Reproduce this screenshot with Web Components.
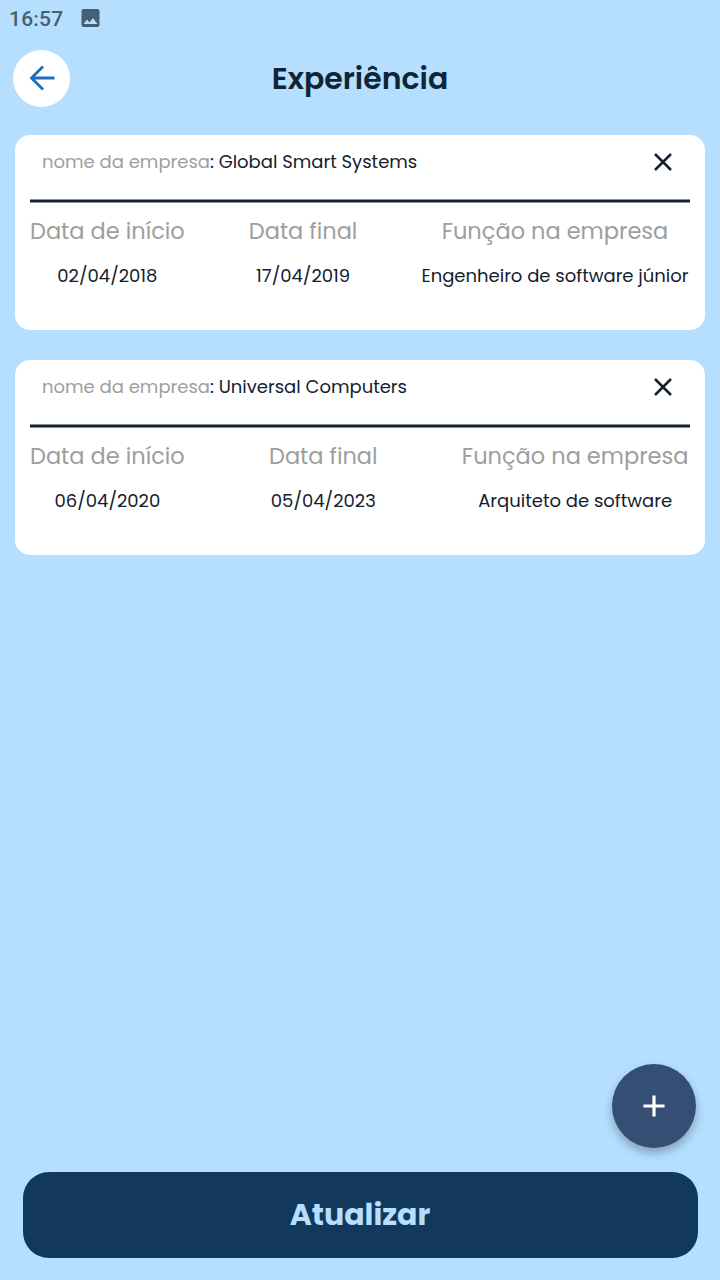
<!DOCTYPE html>
<html lang="pt-BR">
<head>
<meta charset="utf-8">
<meta name="viewport" content="width=device-width, initial-scale=1">
<title>Experiência</title>
<style>
  body {
    background-color: #b5deff;
    color: #14202e;
    font-family: Poppins, Inter, "Open Sans", sans-serif;
    margin: 0;
  }
</style>
</head>
<body>
<experience-page>
  <status-bar slot="status">16:57</status-bar>
  <page-header slot="header">Experiência</page-header>
  <experience-card start="02/04/2018" end="17/04/2019">
    <span slot="name">Global Smart Systems</span>
    <span slot="role">Engenheiro de software júnior</span>
  </experience-card>
  <experience-card start="06/04/2020" end="05/04/2023">
    <span slot="name">Universal Computers</span>
    <span slot="role">Arquiteto de software</span>
  </experience-card>
  <add-button slot="footer"></add-button>
  <update-button slot="footer">Atualizar</update-button>
</experience-page>

<script>
class ExperiencePage extends HTMLElement {
  constructor(){
    super();
    this.attachShadow({mode: "open"}).innerHTML = `
      <style>
        :host {
          box-sizing: border-box;
          display: flex;
          flex-direction: column;
          height: 1280px;
          overflow: hidden;
          width: 720px;
        }
        main {
          display: flex;
          flex: 1;
          flex-direction: column;
          gap: 30px;
          padding: 20px 15px 0;
        }
        footer {
          display: flex;
          flex-direction: column;
          gap: 24px;
          padding: 0 22.5px 22.5px;
        }
      </style>
      <slot name="status"></slot>
      <slot name="header"></slot>
      <main><slot></slot></main>
      <footer><slot name="footer"></slot></footer>
    `;
  }
}

class StatusBar extends HTMLElement {
  constructor(){
    super();
    this.attachShadow({mode: "open"}).innerHTML = `
      <style>
        :host {
          align-items: center;
          color: #465f71;
          display: flex;
          font: 500 21px/38px Roboto, sans-serif;
          height: 37px;
          letter-spacing: 0.2px;
          padding-left: 9px;
        }
        span {
          width: 72px;
        }
        svg {
          display: block;
        }
      </style>
      <span><slot></slot></span>
      <svg width="19" height="19" viewBox="2.500 3 19 19" fill="#465f71">
        <path d="M21 19V5c0-1.100-.9-2-2-2H5c-1.100 0-2 .9-2 2v14c0 1.100.9 2 2 2h14c1.100 0 2-.9 2-2zM8.500 13.500l2.500 3.010L14.500 12l4.500 6H5l3.500-4.500z"/>
      </svg>
    `;
  }
}

class PageHeader extends HTMLElement {
  constructor(){
    super();
    this.attachShadow({mode: "open"}).innerHTML = `
      <style>
        :host {
          align-items: center;
          display: grid;
          grid-template-columns: 57px 1fr 57px;
          height: 78px;
          padding: 0 13px;
        }
        button {
          align-items: center;
          background: white;
          border: none;
          border-radius: 50%;
          display: flex;
          height: 57px;
          justify-content: center;
          margin-top: 4px;
          padding: 0;
          width: 57px;
        }
        h1 {
          color: #0f2535;
          font-size: 30px;
          font-weight: 600;
          line-height: 46px;
          margin: 6px 0 0;
          text-align: center;
        }
      </style>
      <button aria-label="Voltar">
        <svg width="26" height="26" viewBox="0 0 26 26" fill="none" stroke="#1a6fc4" stroke-width="2.800">
          <path d="M25.500 13H3M14 1.500L2.500 13l11.500 11.500"/>
        </svg>
      </button>
      <h1><slot></slot></h1>
    `;
  }
}

class ExperienceCard extends HTMLElement {
  constructor(){
    super();
    const attr = name => this.getAttribute(name);
    this.attachShadow({mode: "open"}).innerHTML = `
      <style>
        :host {
          background-color: white;
          border-radius: 15px;
          box-sizing: border-box;
          display: block;
          font-size: 18px;
          height: 195px;
          padding: 0 15px;
        }
        .top {
          align-items: center;
          display: flex;
          height: 54px;
          justify-content: space-between;
          padding: 0 18px 0 12px;
        }
        .top > span {
          padding-bottom: 2px;
        }
        .label {
          color: #9e9e9e;
        }
        .line {
          display: block;
          margin-top: 10px;
        }
        .columns {
          display: flex;
          justify-content: space-between;
          padding: 10px 1.5px 0 0;
        }
        .columns div {
          align-items: center;
          display: flex;
          flex-direction: column;
          gap: 11px;
          line-height: 32px;
          white-space: nowrap;
        }
        .columns .label {
          font-size: 22.5px;
          line-height: 36px;
        }
      </style>
      <div class="top">
        <span><span class="label">nome da empresa</span>: <slot name="name"></slot></span>
        <svg width="18" height="18" viewBox="0 0 18 18" stroke="#14202e" stroke-width="2.500">
          <path d="M1 1l16 16M17 1L1 17"/>
        </svg>
      </div>
      <svg class="line" width="660" height="4" stroke="#14202e" stroke-width="3">
        <path d="M0 2h660"/>
      </svg>
      <div class="columns">
        <div>
          <span class="label">Data de início</span>
          <span>${attr("start")}</span>
        </div>
        <div>
          <span class="label">Data final</span>
          <span>${attr("end")}</span>
        </div>
        <div>
          <span class="label">Função na empresa</span>
          <slot name="role"></slot>
        </div>
      </div>
    `;
  }
}

class AddButton extends HTMLElement {
  constructor(){
    super();
    this.attachShadow({mode: "open"}).innerHTML = `
      <style>
        :host {
          align-self: flex-end;
          display: block;
          margin-right: 1.5px;
        }
        button {
          align-items: center;
          background-color: #344e74;
          border: none;
          border-radius: 50%;
          box-shadow: 0 5px 10px rgba(0, 0, 0, 0.28);
          display: flex;
          height: 84px;
          justify-content: center;
          padding: 0;
          width: 84px;
        }
      </style>
      <button aria-label="Adicionar">
        <svg width="22" height="22" viewBox="0 0 22 22" stroke="white" stroke-width="3.200">
          <path d="M11 .4v21.200M.4 11h21.200"/>
        </svg>
      </button>
    `;
  }
}

class UpdateButton extends HTMLElement {
  constructor(){
    super();
    this.attachShadow({mode: "open"}).innerHTML = `
      <style>
        :host {
          display: block;
        }
        button {
          background-color: #12395b;
          border: none;
          border-radius: 26px;
          color: #b5deff;
          display: block;
          font: inherit;
          font-size: 30px;
          font-weight: 700;
          height: 85.5px;
          padding: 0;
          width: 100%;
        }
      </style>
      <button><slot></slot></button>
    `;
  }
}

customElements.define("experience-page", ExperiencePage);
customElements.define("status-bar", StatusBar);
customElements.define("page-header", PageHeader);
customElements.define("experience-card", ExperienceCard);
customElements.define("add-button", AddButton);
customElements.define("update-button", UpdateButton);
</script>
</body>
</html>
